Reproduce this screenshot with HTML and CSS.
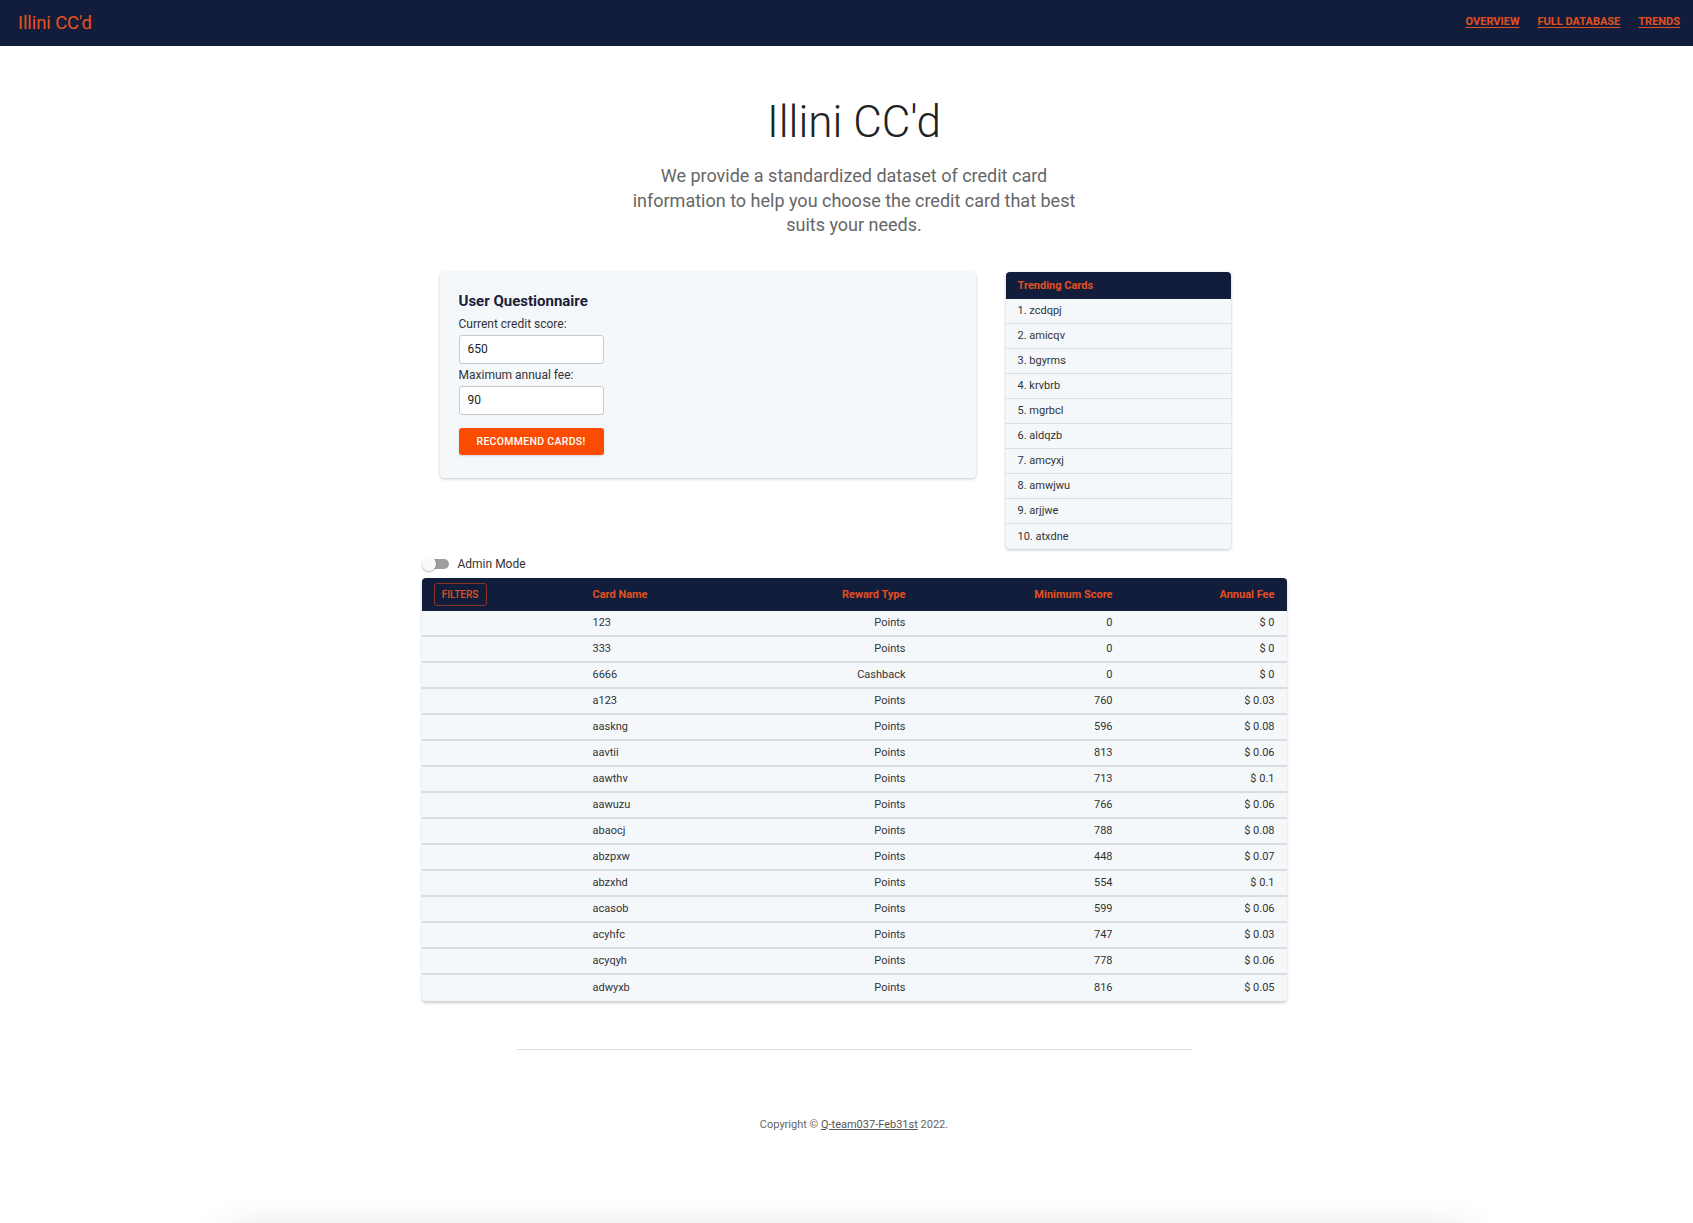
FILE: index.html
```html
<!DOCTYPE html>
<html lang="en">
<head>
<meta charset="utf-8">
<title>Illini CC'd</title>
<link rel="stylesheet" href="styles.css">
</head>
<body>
<header class="nav">
  <a class="brand" href="#">Illini CC'd</a>
  <nav class="nav-links">
    <a href="#">OVERVIEW</a>
    <a href="#">FULL DATABASE</a>
    <a href="#">TRENDS</a>
  </nav>
</header>
<main class="main">
  <h1 class="hero-title">Illini CC'd</h1>
  <p class="hero-sub">We provide a standardized dataset of credit card information to help you choose the credit card that best suits your needs.</p>

  <div class="container">
    <div class="top-row">
      <section class="quiz">
        <h2 class="quiz-title">User Questionnaire</h2>
        <label class="quiz-label">Current credit score:</label>
        <input class="quiz-input" type="text" value="650">
        <label class="quiz-label">Maximum annual fee:</label>
        <input class="quiz-input" type="text" value="90">
        <button class="quiz-btn">RECOMMEND CARDS!</button>
      </section>
      <section class="trending">
        <div class="trending-head">Trending Cards</div>
        <ul class="trending-list">
          <li>1. zcdqpj</li>
          <li>2. amicqv</li>
          <li>3. bgyrms</li>
          <li>4. krvbrb</li>
          <li>5. mgrbcl</li>
          <li>6. aldqzb</li>
          <li>7. amcyxj</li>
          <li>8. amwjwu</li>
          <li>9. arjjwe</li>
          <li>10. atxdne</li>
        </ul>
      </section>
    </div>

    <div class="admin">
      <span class="switch"><span class="switch-track"></span><span class="switch-thumb"></span></span>
      <span class="admin-label">Admin Mode</span>
    </div>

    <table class="cards">
      <colgroup>
        <col class="c0"><col class="c1"><col class="c2"><col class="c3"><col class="c4">
      </colgroup>
      <thead>
        <tr>
          <th class="left"><button class="filters">FILTERS</button></th>
          <th class="left">Card Name</th>
          <th class="right">Reward Type</th>
          <th class="right">Minimum Score</th>
          <th class="right">Annual Fee</th>
        </tr>
      </thead>
      <tbody>
        <tr><td></td><td>123</td><td class="right">Points</td><td class="right">0</td><td class="right">$ 0</td></tr>
        <tr><td></td><td>333</td><td class="right">Points</td><td class="right">0</td><td class="right">$ 0</td></tr>
        <tr><td></td><td>6666</td><td class="right">Cashback</td><td class="right">0</td><td class="right">$ 0</td></tr>
        <tr><td></td><td>a123</td><td class="right">Points</td><td class="right">760</td><td class="right">$ 0.03</td></tr>
        <tr><td></td><td>aaskng</td><td class="right">Points</td><td class="right">596</td><td class="right">$ 0.08</td></tr>
        <tr><td></td><td>aavtii</td><td class="right">Points</td><td class="right">813</td><td class="right">$ 0.06</td></tr>
        <tr><td></td><td>aawthv</td><td class="right">Points</td><td class="right">713</td><td class="right">$ 0.1</td></tr>
        <tr><td></td><td>aawuzu</td><td class="right">Points</td><td class="right">766</td><td class="right">$ 0.06</td></tr>
        <tr><td></td><td>abaocj</td><td class="right">Points</td><td class="right">788</td><td class="right">$ 0.08</td></tr>
        <tr><td></td><td>abzpxw</td><td class="right">Points</td><td class="right">448</td><td class="right">$ 0.07</td></tr>
        <tr><td></td><td>abzxhd</td><td class="right">Points</td><td class="right">554</td><td class="right">$ 0.1</td></tr>
        <tr><td></td><td>acasob</td><td class="right">Points</td><td class="right">599</td><td class="right">$ 0.06</td></tr>
        <tr><td></td><td>acyhfc</td><td class="right">Points</td><td class="right">747</td><td class="right">$ 0.03</td></tr>
        <tr><td></td><td>acyqyh</td><td class="right">Points</td><td class="right">778</td><td class="right">$ 0.06</td></tr>
        <tr><td></td><td>adwyxb</td><td class="right">Points</td><td class="right">816</td><td class="right">$ 0.05</td></tr>
      </tbody>
    </table>
  </div>

  <hr class="footer-rule">
  <p class="copyright">Copyright © <a href="#">Q-team037-Feb31st</a> 2022.</p>
</main>
<div class="bottom-sheet"></div>
</body>
</html>
```

FILE: styles.css
```css
* { box-sizing: border-box; }

html, body {
  margin: 0;
  padding: 0;
  background: #ffffff;
  font-family: Roboto, "Liberation Sans", Arial, sans-serif;
  color: #333;
}

body { overflow: hidden; }

.nav {
  height: 46px;
  background: #121d3b;
  display: flex;
  align-items: center;
  justify-content: space-between;
  padding: 0 13px 0 18px;
}

.brand {
  color: #e8511d;
  font-size: 18.5px;
  font-weight: 400;
  text-decoration: none;
  letter-spacing: -0.1px;
}

.nav-links {
  display: flex;
  gap: 18px;
  padding-bottom: 4px;
}

.nav-links a {
  color: #e2501f;
  font-size: 11px;
  font-weight: 700;
  text-decoration: underline;
  text-underline-offset: 2px;
}

.main {
  padding-left: 15px;
  display: flex;
  flex-direction: column;
  align-items: center;
}

.hero-title {
  margin: 48px 0 0;
  font-size: 44px;
  line-height: 56px;
  font-weight: 300;
  color: #222;
}

.hero-sub {
  margin: 14px 0 0;
  width: 460px;
  text-align: center;
  font-size: 18px;
  line-height: 24.5px;
  color: #666;
}

.container {
  width: 865px;
  margin-top: 34px;
}

.top-row {
  display: flex;
  align-items: flex-start;
  gap: 30px;
  padding-left: 18px;
}

.quiz {
  width: 536px;
  background: #f5f8fb;
  border-radius: 4px;
  box-shadow: 0 1px 3px rgba(0,0,0,0.22);
  padding: 19px 19px 23px;
  display: flex;
  flex-direction: column;
  align-items: flex-start;
}

.quiz-title {
  margin: 0;
  font-size: 15px;
  line-height: 20px;
  font-weight: 700;
  color: #19213a;
}

.quiz-label {
  margin-top: 5px;
  font-size: 12px;
  line-height: 16px;
  color: #333;
}

.quiz-label + .quiz-input { margin-top: 3px; }

.quiz-input {
  width: 145px;
  height: 29px;
  border: 1px solid #c7c9cc;
  border-radius: 3px;
  background: #fff;
  padding: 0 8px;
  font-family: inherit;
  font-size: 12px;
  color: #222;
}

.quiz-input + .quiz-label { margin-top: 3px; }

.quiz-btn {
  margin-top: 13px;
  width: 145px;
  height: 27px;
  border: none;
  border-radius: 3px;
  background: #fc4c02;
  color: #fff;
  font-family: inherit;
  font-size: 10.5px;
  font-weight: 500;
  letter-spacing: 0.3px;
  box-shadow: 0 1px 2px rgba(0,0,0,0.15);
}

.trending {
  width: 225px;
  border-radius: 4px;
  overflow: hidden;
  box-shadow: 0 1px 3px rgba(0,0,0,0.25);
  background: #f5f8fb;
}

.trending-head {
  height: 27px;
  background: #121d3b;
  color: #e2501f;
  font-size: 11px;
  font-weight: 700;
  display: flex;
  align-items: center;
  padding-left: 12px;
}

.trending-list {
  list-style: none;
  margin: 0;
  padding: 0;
}

.trending-list li {
  height: 25px;
  border-bottom: 1px solid #dadee3;
  display: flex;
  align-items: center;
  padding-left: 12px;
  font-size: 11px;
  color: #333;
}

.trending-list li:last-child { border-bottom: none; }

.admin {
  margin-top: 5px;
  height: 20px;
  display: flex;
  align-items: center;
  gap: 9px;
}

.switch {
  position: relative;
  width: 27px;
  height: 14px;
  flex: none;
}

.switch-track {
  position: absolute;
  left: 4px;
  top: 2px;
  width: 23px;
  height: 10px;
  border-radius: 5px;
  background: #9e9e9e;
}

.switch-thumb {
  position: absolute;
  left: 0;
  top: 0;
  width: 14px;
  height: 14px;
  border-radius: 50%;
  background: #fafafa;
  box-shadow: 0 1px 2px rgba(0,0,0,0.3);
}

.admin-label {
  font-size: 12px;
  color: #333;
}

.cards {
  margin-top: 4px;
  width: 865px;
  table-layout: fixed;
  border-collapse: separate;
  border-spacing: 0;
  border-radius: 4px;
  overflow: hidden;
  box-shadow: 0 2px 3px rgba(0,0,0,0.2);
  background: #f5f8fb;
}

.c0 { width: 159px; }
.c1 { width: 169px; }
.c2 { width: 168px; }
.c3 { width: 207px; }
.c4 { width: 162px; }

.cards thead th {
  height: 33px;
  background: #121d3b;
  color: #e2501f;
  font-size: 11px;
  font-weight: 700;
  padding: 0 12px;
}

.cards td {
  height: 26px;
  padding: 0 12px;
  font-size: 11px;
  color: #333;
  border-bottom: 2px solid #d9dde2;
}

.cards tbody tr:last-child td { border-bottom: none; height: 26px; }

.left { text-align: left; }
.right { text-align: right; }

.filters {
  width: 53px;
  height: 23px;
  background: transparent;
  border: 1px solid #8a3322;
  border-radius: 3px;
  color: #e2501f;
  font-family: inherit;
  font-size: 10px;
  font-weight: 500;
  padding: 0;
}

.footer-rule {
  width: 675px;
  margin: 48px 0 0;
  border: none;
  border-top: 1px solid #dedede;
}

.copyright {
  margin: 68px 0 0;
  font-size: 11px;
  line-height: 14px;
  color: #666;
}

.copyright a { color: #555; }

.bottom-sheet {
  width: 1230px;
  height: 40px;
  margin: 106px auto 0;
  background: #fff;
  box-shadow: 0 0 40px 4px rgba(0,0,0,0.16);
}
```
